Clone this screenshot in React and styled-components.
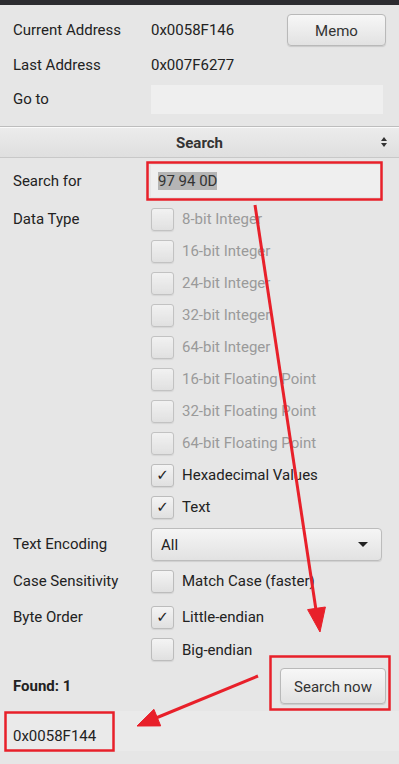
import React from 'react'
import styled, { createGlobalStyle } from 'styled-components'

const GlobalStyle = createGlobalStyle`
  body {
    margin: 0;
    background: #e6e6e6;
    font-family: Roboto, 'Liberation Sans', sans-serif;
  }
`

const Page = styled.div`
  width: 399px;
  height: 764px;
  position: relative;
  overflow: hidden;
  background: #e6e6e6;
  color: #222;
  font-size: 15px;
`

const TopBar = styled.div`
  height: 5px;
  background: #2c2c30;
`

const InfoSection = styled.div`
  display: flex;
  flex-direction: column;
  gap: 6px;
  padding: 9px 13px 12px 13px;
`

const Row = styled.div`
  display: flex;
  align-items: center;
  height: ${(p) => p.h || 32}px;
`

const Label = styled.div`
  width: 138px;
  flex-shrink: 0;
  font-weight: ${(p) => (p.bold ? 700 : 400)};
`

const Value = styled.div`
  flex: 1;
`

const Button = styled.button`
  margin-left: auto;
  width: ${(p) => p.w}px;
  height: ${(p) => p.h}px;
  border: 1px solid #b9b9b9;
  border-radius: 4px;
  background: linear-gradient(#f7f7f7, #e2e2e2);
  box-shadow: 0 1px 1px rgba(0, 0, 0, 0.12);
  font-family: inherit;
  font-size: 15px;
  color: #333;
  padding: 2px 0 0;
`

const TextInput = styled.div`
  width: ${(p) => p.w}px;
  height: ${(p) => p.h}px;
  background: #efefef;
  display: flex;
  align-items: center;
  padding-left: 7px;
  box-sizing: border-box;
`

const Selected = styled.span`
  background: #b5b5b5;
  color: #333;
`

const Header = styled.div`
  height: 32px;
  box-sizing: border-box;
  border-top: 1px solid #bdbdbd;
  border-bottom: 1px solid #c8c8c8;
  box-shadow: inset 0 1px 0 #fafafa;
  background: linear-gradient(#ececec, #dfdfdf);
  display: flex;
  align-items: center;
  justify-content: center;
  position: relative;
  font-weight: 700;
  color: #333;
  padding-top: 2px;
`

const SortIcon = styled.div`
  position: absolute;
  right: 12px;
  top: 10px;
  display: flex;
  flex-direction: column;
  gap: 2px;
`

const Tri = styled.div`
  width: 0;
  height: 0;
  border-left: 3.5px solid transparent;
  border-right: 3.5px solid transparent;
  ${(p) => (p.up ? 'border-bottom' : 'border-top')}: 4px solid #333;
`

const SearchSection = styled.div`
  padding: 7px 13px 0 13px;
`

const OptionGrid = styled.div`
  display: grid;
  grid-template-columns: 138px 1fr;
  margin-top: 6px;
`

const OptionList = styled.div`
  display: flex;
  flex-direction: column;
  margin-top: ${(p) => p.mt || 0}px;
`

const Option = styled.div`
  display: flex;
  align-items: center;
  height: ${(p) => p.h || 32}px;
  gap: 8px;
  color: ${(p) => (p.disabled ? '#9a9a9a' : '#222')};
`

const Box = styled.div`
  width: 21px;
  height: 21px;
  border: 1px solid #bcbcbc;
  border-radius: 3px;
  background: linear-gradient(#f4f4f4, #e0e0e0);
  box-shadow: 0 1px 1px rgba(0, 0, 0, 0.08);
  display: flex;
  align-items: center;
  justify-content: center;
  font-family: 'DejaVu Sans', sans-serif;
  font-size: 15px;
  color: #222;
  opacity: ${(p) => (p.disabled ? 0.85 : 1)};
`

const LabelCell = styled.div`
  height: ${(p) => p.h || 32}px;
  margin-top: ${(p) => p.mt || 0}px;
  display: flex;
  align-items: center;
`

const Select = styled.div`
  width: 231px;
  height: 33px;
  margin-top: 5px;
  border: 1px solid #bcbcbc;
  border-radius: 4px;
  box-sizing: border-box;
  background: linear-gradient(#f5f5f5, #e2e2e2);
  box-shadow: 0 1px 1px rgba(0, 0, 0, 0.1);
  display: flex;
  align-items: center;
  justify-content: space-between;
  padding: 0 13px 0 9px;
`

const Caret = styled.div`
  width: 0;
  height: 0;
  border-left: 5px solid transparent;
  border-right: 5px solid transparent;
  border-top: 5px solid #222;
`

const FoundRow = styled.div`
  display: flex;
  align-items: center;
  height: 36px;
  margin-top: 2px;
`

const ResultRow = styled.div`
  margin-top: 7px;
  height: 40px;
  background: #eaeaea;
  display: flex;
  align-items: flex-end;
  padding: 0 0 6px 13px;
  box-sizing: border-box;
`

const Overlay = styled.svg`
  position: absolute;
  left: 0;
  top: 0;
  pointer-events: none;
`

const dataTypes = [
  ['8-bit Integer', false, true],
  ['16-bit Integer', false, true],
  ['24-bit Integer', false, true],
  ['32-bit Integer', false, true],
  ['64-bit Integer', false, true],
  ['16-bit Floating Point', false, true],
  ['32-bit Floating Point', false, true],
  ['64-bit Floating Point', false, true],
  ['Hexadecimal Values', true, false],
  ['Text', true, false],
]

const Check = ({ label, checked, disabled, h }) => (
  <Option disabled={disabled} h={h}>
    <Box disabled={disabled}>{checked ? '✓' : ''}</Box>
    {label}
  </Option>
)

const App = () => {
  return (
    <Page>
      <GlobalStyle />
      <TopBar />
      <InfoSection>
        <Row h={32}>
          <Label>Current Address</Label>
          <Value>0x0058F146</Value>
          <Button w={99} h={32}>Memo</Button>
        </Row>
        <Row h={26}>
          <Label>Last Address</Label>
          <Value>0x007F6277</Value>
        </Row>
        <Row h={30}>
          <Label>Go to</Label>
          <TextInput w={232} h={29} />
        </Row>
      </InfoSection>
      <Header>
        Search
        <SortIcon>
          <Tri up />
          <Tri />
        </SortIcon>
      </Header>
      <SearchSection>
        <Row h={32}>
          <Label>Search for</Label>
          <TextInput w={230} h={32}>
            <Selected>97 94 0D</Selected>
          </TextInput>
        </Row>
        <OptionGrid>
          <LabelCell>Data Type</LabelCell>
          <OptionList>
            {dataTypes.map(([label, checked, disabled]) => (
              <Check key={label} label={label} checked={checked} disabled={disabled} />
            ))}
          </OptionList>
          <LabelCell mt={5} h={31}>Text Encoding</LabelCell>
          <Select>
            All
            <Caret />
          </Select>
          <LabelCell mt={4}>Case Sensitivity</LabelCell>
          <OptionList mt={4}>
            <Check label='Match Case (faster)' />
          </OptionList>
          <LabelCell mt={4}>Byte Order</LabelCell>
          <OptionList mt={4}>
            <Check label='Little-endian' checked />
            <Check label='Big-endian' h={33} />
          </OptionList>
        </OptionGrid>
        <FoundRow>
          <Label bold>Found: 1</Label>
          <Button w={106} h={36}>Search now</Button>
        </FoundRow>
      </SearchSection>
      <ResultRow>0x0058F144</ResultRow>
      <Overlay width='399' height='764' viewBox='0 0 399 764'>
        <g fill='none' stroke='#e8202a' strokeWidth='2.5'>
          <rect x='147.5' y='162.5' width='234' height='37' />
          <rect x='270.5' y='656.5' width='119' height='53' />
          <rect x='5.5' y='712.5' width='108' height='38' />
        </g>
        <g stroke='#e8202a' strokeWidth='3' fill='#e8202a'>
          <line x1='255' y1='205' x2='316' y2='610' />
          <polygon points='320,632 325.4,607 307.6,609.6' strokeWidth='1' />
          <line x1='258' y1='676' x2='156' y2='718' />
          <polygon points='137,726 160.7,725.9 153.9,709.3' strokeWidth='1' />
        </g>
      </Overlay>
    </Page>
  )
}

export default App
